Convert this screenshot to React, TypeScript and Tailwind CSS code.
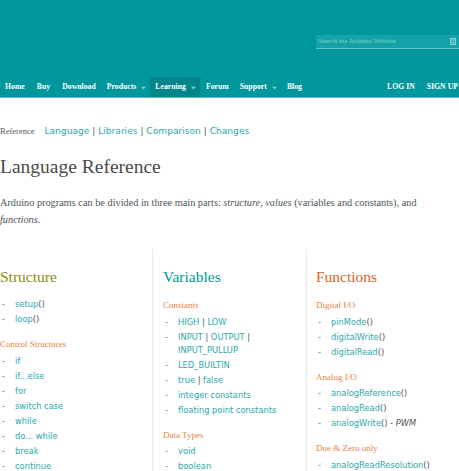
import type { ReactNode } from "react";

const SERIF = "font-['Liberation_Serif',serif]";
const SANS = "font-['DejaVu_Sans',sans-serif]";

const NAV_LEFT: { label: string; caret?: boolean; active?: boolean }[] = [
  { label: "Home" },
  { label: "Buy" },
  { label: "Download" },
  { label: "Products", caret: true },
  { label: "Learning", caret: true, active: true },
  { label: "Forum" },
  { label: "Support", caret: true },
  { label: "Blog" },
];

function Caret() {
  return (
    <svg width={5} height={4} viewBox="0 0 5 4" className="ml-[5px] mt-[2px]" aria-hidden="true">
      <path d="M0 0.8h5L2.5 3.4Z" fill="#7fd0d2" />
    </svg>
  );
}

function Header() {
  return (
    <header className="h-[98px] bg-[#00979c] border-b border-[#5ec0c3] flex flex-col">
      <div className="flex justify-end pt-[35px]">
        <div className="w-[143px] h-[14px] bg-[#13a2a7] border-b border-[#62c6c9] flex items-center pl-[2px] pr-[3px]">
          <span className={`${SERIF} flex-1 text-[7px] leading-none text-[#7fd0d2]`}>
            Search the Arduino Website
          </span>
          <span className="w-[6px] h-[7px] border border-[#7fd0d2] bg-[#4cb9bd]" aria-hidden="true" />
        </div>
      </div>
      <nav className={`${SERIF} mt-auto h-[20px] flex items-stretch text-[7.75px] font-bold text-white`}>
        {NAV_LEFT.map((n) => (
          <span
            key={n.label}
            className={`flex items-center first:pl-[5px] ${n.caret ? "pl-[5px] pr-[4px]" : "px-[6px]"} ${
              n.active ? "bg-[#00868a]" : ""
            }`}
          >
            {n.label}
            {n.caret && <Caret />}
          </span>
        ))}
        <span className="ml-auto mr-[1px] flex items-center gap-[12px]">
          <span>LOG IN</span>
          <span>SIGN UP</span>
        </span>
      </nav>
    </header>
  );
}

function Item({ children, extra }: { children: ReactNode; extra?: ReactNode }) {
  return (
    <li className="flex py-[1px] leading-[13px]">
      <span className="w-[15px] pl-[2px] shrink-0 text-[#777]">-</span>
      <span className="text-[#2aa8ac]">
        {children}
        {extra}
      </span>
    </li>
  );
}

function Fn({ name, extra }: { name: string; extra?: ReactNode }) {
  return (
    <Item extra={extra}>
      {name}
      <span className="text-[#555]">()</span>
    </Item>
  );
}

function Sub({ children, first }: { children: ReactNode; first?: boolean }) {
  return (
    <div
      className={`${SERIF} text-[9px] leading-[14px] text-[#e5823f] ${first ? "mt-[11px]" : "mt-[10px]"} mb-[2.5px]`}
    >
      {children}
    </div>
  );
}

function Heading({ children, color }: { children: ReactNode; color: string }) {
  return <h2 className={`${SERIF} mt-[18px] text-[15.5px] leading-[20px] ${color}`}>{children}</h2>;
}

export default function App() {
  return (
    <div className="w-[459px] h-[471px] overflow-hidden bg-white">
      <Header />
      <main>
        <div className="mt-[26px] flex items-center leading-[14px]">
          <span className={`${SERIF} text-[8.5px] text-[#555]`}>Reference</span>
          <span className={`${SANS} ml-[10px] text-[9.1px] text-[#2aa8ac]`}>
            Language <span className="text-[#555]">|</span> Libraries{" "}
            <span className="text-[#555]">|</span> Comparison <span className="text-[#555]">|</span> Changes
          </span>
        </div>
        <h1 className={`${SERIF} mt-[17px] text-[19.5px] leading-[24px] text-[#4a4a4a]`}>Language Reference</h1>
        <p className={`${SERIF} mt-[15px] text-[10.3px] leading-[17px] text-[#4c555a] whitespace-nowrap`}>
          Arduino programs can be divided in three main parts: <i>structure</i>, <i>values</i> (variables and
          constants), and
          <br />
          <i>functions</i>.
        </p>
        <div className={`${SANS} mt-[21px] grid grid-cols-[152px_154px_1fr] text-[8.3px]`}>
          <section>
            <Heading color="text-[#8a8a0c]">Structure</Heading>
            <ul className="mt-[10px]">
              <Fn name="setup" />
              <Fn name="loop" />
            </ul>
            <Sub>Control Structures</Sub>
            <ul>
              <Item>if</Item>
              <Item>if...else</Item>
              <Item>for</Item>
              <Item>switch case</Item>
              <Item>while</Item>
              <Item>do... while</Item>
              <Item>break</Item>
              <Item>continue</Item>
            </ul>
          </section>
          <section className="border-l border-[#e8e8e8] pl-[10px]">
            <Heading color="text-[#00979c]">Variables</Heading>
            <Sub first>Constants</Sub>
            <ul>
              <Item>
                HIGH <span className="text-[#555]">|</span> LOW
              </Item>
              <Item>
                INPUT <span className="text-[#555]">|</span> OUTPUT <span className="text-[#555]">|</span>
                <br />
                INPUT_PULLUP
              </Item>
              <Item>LED_BUILTIN</Item>
              <Item>
                true <span className="text-[#555]">|</span> false
              </Item>
              <Item>integer constants</Item>
              <Item>floating point constants</Item>
            </ul>
            <Sub>Data Types</Sub>
            <ul>
              <Item>void</Item>
              <Item>boolean</Item>
            </ul>
          </section>
          <section className="border-l border-[#e8e8e8] pl-[9px]">
            <Heading color="text-[#d9651e]">Functions</Heading>
            <Sub first>Digital I/O</Sub>
            <ul>
              <Fn name="pinMode" />
              <Fn name="digitalWrite" />
              <Fn name="digitalRead" />
            </ul>
            <Sub>Analog I/O</Sub>
            <ul>
              <Fn name="analogReference" />
              <Fn name="analogRead" />
              <Fn name="analogWrite" extra={<span className="text-[#555]"> - <i>PWM</i></span>} />
            </ul>
            <Sub>Due &amp; Zero only</Sub>
            <ul>
              <Fn name="analogReadResolution" />
            </ul>
          </section>
        </div>
      </main>
    </div>
  );
}
